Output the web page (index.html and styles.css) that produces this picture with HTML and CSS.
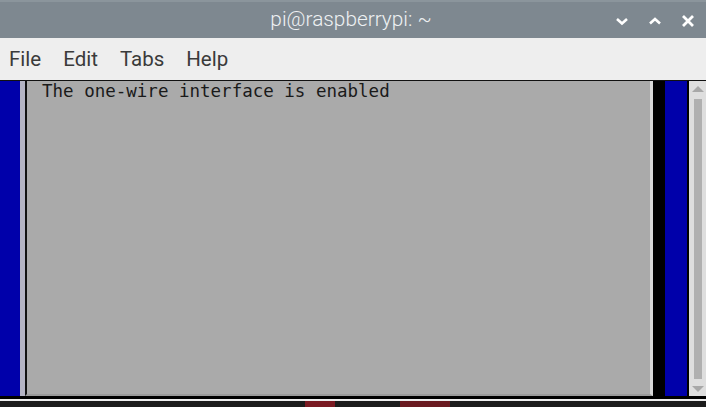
FILE: index.html
```html
<!DOCTYPE html>
<html lang="en">
<head>
  <meta charset="UTF-8">
  <title>pi@raspberrypi: ~</title>
  <link rel="stylesheet" href="styles.css">
</head>
<body>
  <div class="window">
    <div class="titlebar">
      <div class="title">pi@raspberrypi: ~</div>
      <div class="win-btns">
        <svg class="win-btn" width="14" height="10" viewBox="0 0 14 10"><path d="M2 3 L7 7.5 L12 3" fill="none" stroke="#fff" stroke-width="2.6"/></svg>
        <svg class="win-btn" width="14" height="10" viewBox="0 0 14 10"><path d="M2 7.5 L7 3 L12 7.5" fill="none" stroke="#fff" stroke-width="2.6"/></svg>
        <svg class="win-btn" width="14" height="14" viewBox="0 0 14 14"><path d="M2 2 L12 12 M12 2 L2 12" fill="none" stroke="#fff" stroke-width="2.8"/></svg>
      </div>
    </div>

    <div class="menubar">
      <span class="menu-item">File</span>
      <span class="menu-item">Edit</span>
      <span class="menu-item">Tabs</span>
      <span class="menu-item">Help</span>
    </div>

    <div class="terminal">
      <div class="screen">
        <div class="bg-left"></div>
        <div class="dialog">
          <div class="msg">The one-wire interface is enabled</div>
        </div>
        <div class="shadow"></div>
        <div class="bg-right"></div>
      </div>
      <div class="scrollbar">
        <div class="arrow up"></div>
        <div class="thumb"></div>
        <div class="arrow down"></div>
      </div>
    </div>

    <div class="bottom-edge"></div>
    <div class="taskbar">
      <span class="red-a"></span>
      <span class="red-b"></span>
    </div>
  </div>
</body>
</html>
```

FILE: styles.css
```css
html, body {
  margin: 0;
  padding: 0;
  overflow: hidden;
}
body {
  width: 706px;
  height: 407px;
  background-color: #222;
}
.window {
  display: flex;
  flex-direction: column;
  height: 407px;
}
.titlebar {
  height: 38px;
  background-color: #7e8890;
  border-top: 2px solid #8b959c;
  box-sizing: border-box;
  display: flex;
  align-items: center;
  justify-content: center;
  position: relative;
}
.title {
  font-family: Roboto, "Liberation Sans", sans-serif;
  font-weight: 300;
  font-size: 20.8px;
  color: #eef1f3;
  margin-left: -4px;
  margin-top: -2px;
}
.win-btns {
  position: absolute;
  right: 11px;
  top: 12px;
  display: flex;
  align-items: center;
  gap: 19px;
}
.menubar {
  height: 42px;
  background-color: #eeeeee;
  display: flex;
  align-items: center;
  padding-left: 9px;
  font-family: Roboto, "Liberation Sans", sans-serif;
  font-size: 20.5px;
  color: #3a3a3a;
}
.menu-item {
  margin-right: 22px;
}
.terminal {
  height: 316px;
  display: flex;
  border-top: 1px solid #111;
  box-sizing: border-box;
}
.screen {
  flex: 1;
  display: flex;
}
.bg-left {
  width: 20px;
  background-color: #0000aa;
  border-right: 5px solid #b4b4c4;
}
.dialog {
  flex: 1;
  background-color: #aaaaaa;
  border-left: 2px solid #111;
  border-bottom: 2px solid #9a9a9a;
  border-right: 3px solid #d8d8d8;
  padding: 1px 0 0 15px;
}
.msg {
  font-family: "DejaVu Sans Mono", "Liberation Mono", monospace;
  font-size: 17.5px;
  line-height: 19px;
  color: #1a1a1a;
}
.shadow {
  width: 12px;
  background-color: #000;
}
.bg-right {
  width: 22px;
  background-color: #0000aa;
  border-right: 2px solid #000;
}
.scrollbar {
  width: 17px;
  background-color: #dedede;
  display: flex;
  flex-direction: column;
  align-items: center;
}
.arrow {
  width: 0;
  height: 0;
  border-left: 6px solid transparent;
  border-right: 6px solid transparent;
}
.arrow.up {
  margin-top: 5px;
  border-bottom: 6px solid #a8a8a8;
}
.arrow.down {
  margin-bottom: 4px;
  border-top: 6px solid #a8a8a8;
}
.thumb {
  flex: 1;
  width: 8px;
  margin: 7px 0;
  background-color: #b0b0b0;
}
.bottom-edge {
  height: 3px;
  background-color: #000;
  border-bottom: 2px solid #eeeeee;
}
.taskbar {
  flex: 1;
  background-color: #1c1c1c;
  position: relative;
}
.red-a {
  position: absolute;
  left: 305px;
  top: 0;
  width: 30px;
  height: 6px;
  background-color: #7a1a22;
}
.red-b {
  position: absolute;
  left: 400px;
  top: 0;
  width: 50px;
  height: 6px;
  background-color: #6a1a20;
}
```
